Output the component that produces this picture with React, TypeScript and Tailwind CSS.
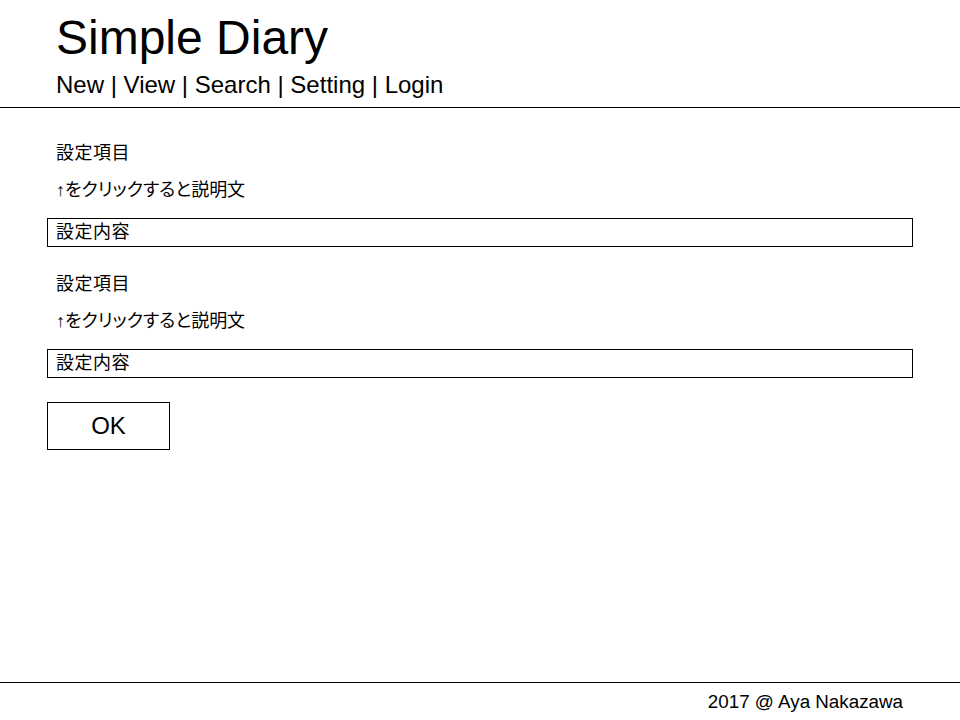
import React from "react";

const font = { fontFamily: '"Liberation Sans", Arial, "Noto Sans CJK JP", sans-serif' };

function SettingGroup({ first }: { first?: boolean }) {
  return (
    <div className={first ? "" : "mt-[25px]"}>
      <div className="pl-[9px] text-[18px] leading-[24px] tracking-[0.5px]">設定項目</div>
      <div className="mt-[13px] pl-[9px] text-[18px] leading-[24px] [font-feature-settings:'palt']">
        ↑をクリックすると説明文
      </div>
      <div className="mt-[16px] h-[29px] border border-black pl-[8px] text-[18px] leading-[27px] tracking-[0.5px]">
        設定内容
      </div>
    </div>
  );
}

export default function App() {
  return (
    <div className="flex h-[720px] w-[960px] flex-col bg-white text-black" style={font}>
      <header className="border-b border-black px-[56px] pt-[10px] pb-[8px]">
        <h1 className="text-[48px] leading-[56px] font-normal">Simple Diary</h1>
        <nav className="mt-[5px] text-[24px] leading-[28px]">New | View | Search | Setting | Login</nav>
      </header>
      <main className="flex-1 pr-[47px] pl-[47px] pt-[33px]">
        <SettingGroup first />
        <SettingGroup />
        <button className="mt-[24px] h-[48px] w-[123px] border border-black bg-white text-[24px] leading-[46px]">
          OK
        </button>
      </main>
      <footer className="flex justify-end border-t border-black pt-[7px] pb-[6px] pr-[57px] text-[18.8px] leading-[24px]">
        2017 @ Aya Nakazawa
      </footer>
    </div>
  );
}
